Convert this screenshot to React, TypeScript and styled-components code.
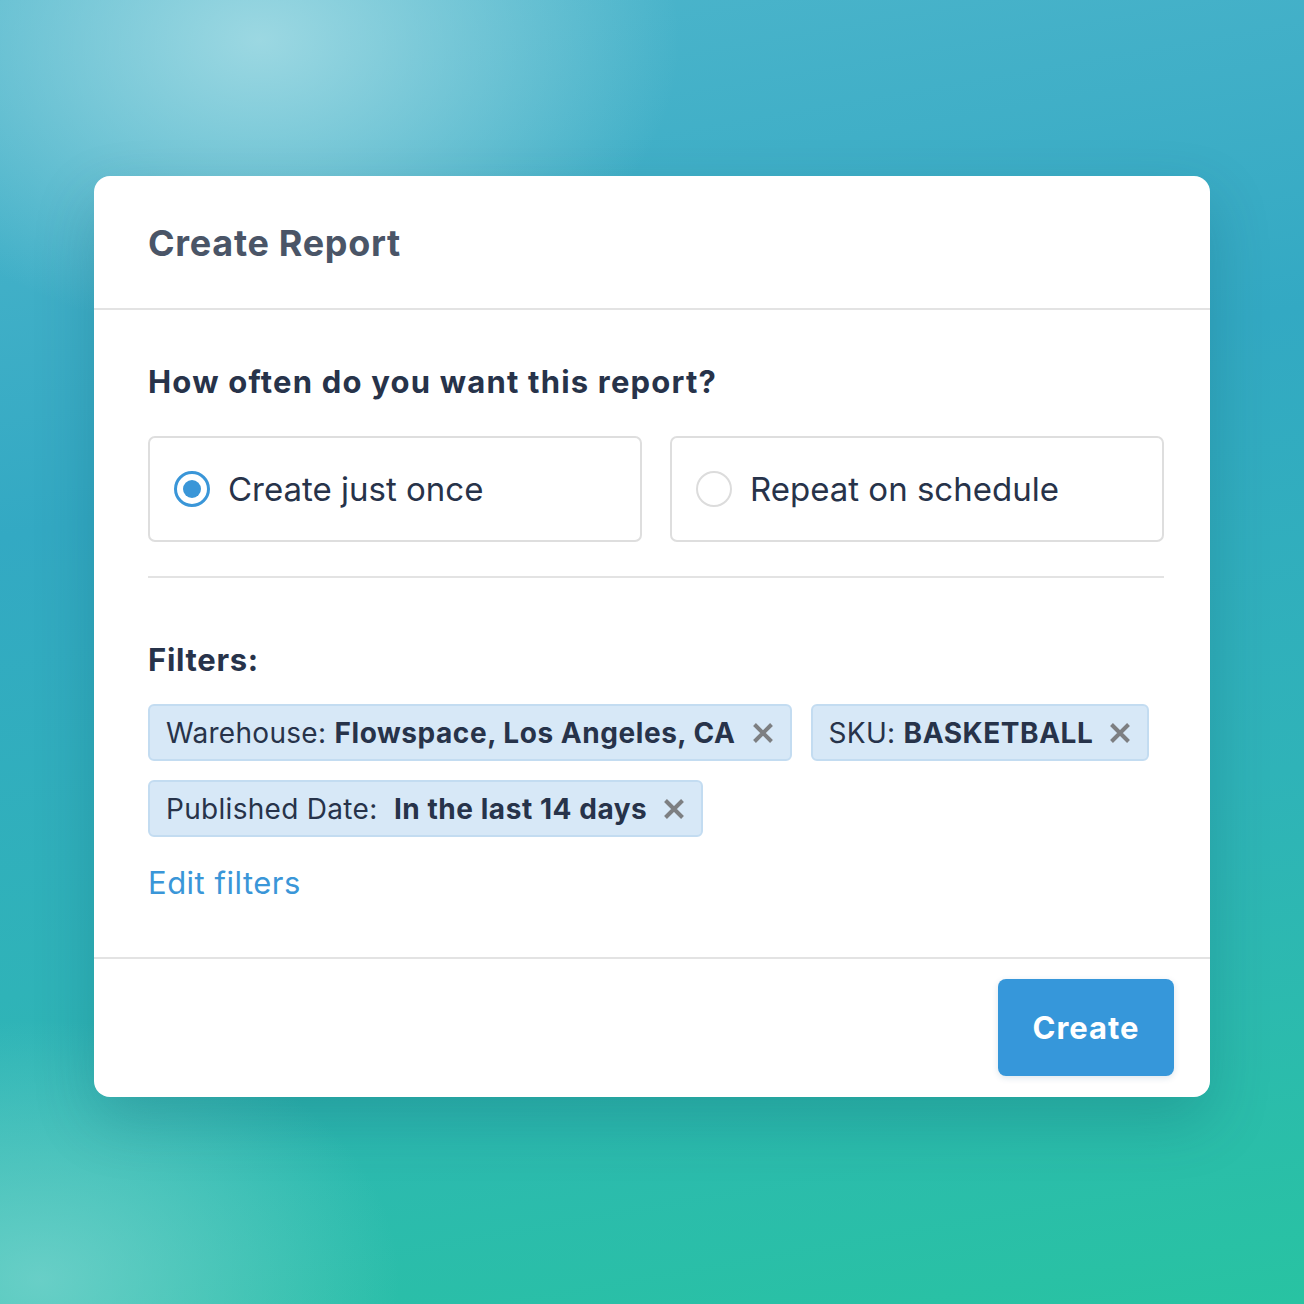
import React from "react"
import styled, { createGlobalStyle } from "styled-components"

const GlobalStyle = createGlobalStyle`
  html, body {
    margin: 0;
    padding: 0;
  }

  body {
    font-family: "Inter", "Noto Sans", sans-serif;
  }
`

const Page = styled.div`
  width: 1304px;
  height: 1304px;

  display: flex;
  justify-content: center;
  align-items: flex-start;

  padding-top: 176px;
  box-sizing: border-box;

  background:
    radial-gradient(ellipse 420px 300px at 260px 40px, rgba(170, 222, 230, 0.85), rgba(170, 222, 230, 0) 100%),
    radial-gradient(ellipse 360px 260px at 40px 1280px, rgba(130, 215, 210, 0.7), rgba(130, 215, 210, 0) 100%),
    linear-gradient(170deg, #4fb6cc 0%, #33a9c3 35%, #2fb3b8 65%, #28c3a2 100%);
`

const Card = styled.div`
  width: 1116px;

  display: flex;
  flex-direction: column;

  background: #ffffff;
  border-radius: 16px;

  box-shadow: 0 24px 60px rgba(10, 70, 90, 0.22);
`

const Header = styled.div`
  height: 132px;
  padding: 0 54px;

  display: flex;
  align-items: center;

  border-bottom: 2px solid #e3e3e3;
`

const Title = styled.h1`
  margin: 2px 0 0 0;

  font-size: 36px;
  font-weight: 700;
  color: #4a5567;
  letter-spacing: 0.7px;
`

const Body = styled.div`
  padding: 52px 46px 54px 54px;

  display: flex;
  flex-direction: column;
`

const SectionTitle = styled.h2`
  margin: 0;

  font-size: 31px;
  font-weight: 700;
  color: #27334a;
  line-height: 40px;
  letter-spacing: 1.2px;
`

const Options = styled.div`
  display: grid;
  grid-template-columns: 1fr 1fr;
  gap: 28px;

  margin-top: 34px;
  padding-bottom: 34px;

  border-bottom: 2px solid #e3e3e3;
`

const Option = styled.label`
  height: 106px;
  padding: 0 24px;
  box-sizing: border-box;

  display: flex;
  align-items: center;
  gap: 18px;

  border: 2px solid #dedede;
  border-radius: 7px;

  font-size: 33px;
  color: #27334a;

  cursor: pointer;
`

const Radio = styled.span<{ $checked?: boolean }>`
  width: 36px;
  height: 36px;
  box-sizing: border-box;
  flex-shrink: 0;

  display: flex;
  justify-content: center;
  align-items: center;

  border-radius: 50%;
  border: ${ props => props.$checked ? "3px solid #3a96d8" : "2px solid #dcdcdc" };

  &::after {
    content: "";
    display: ${ props => props.$checked ? "block" : "none" };

    width: 18px;
    height: 18px;

    border-radius: 50%;
    background: #3a96d8;
  }
`

const FiltersTitle = styled(SectionTitle)`
  margin-top: 62px;
  letter-spacing: 0.7px;
`

const Chips = styled.div`
  display: flex;
  flex-wrap: wrap;
  gap: 19px;

  margin-top: 24px;
`

const Chip = styled.div`
  height: 57px;
  padding: 0 16px 0 16px;
  box-sizing: border-box;

  display: flex;
  align-items: center;

  background: #d7e8f7;
  border: 2px solid #c3dcf1;
  border-radius: 6px;

  font-size: 28px;
  color: #27334a;
  letter-spacing: 0.3px;
  white-space: pre;
`

const ChipValue = styled.b`
  font-weight: 700;
  letter-spacing: 0.55px;
`

const Remove = styled.button`
  display: flex;
  align-items: center;
  justify-content: center;

  margin-left: 16px;
  padding: 0;

  border: none;
  background: none;

  cursor: pointer;
`

const EditLink = styled.a`
  margin-top: 26px;

  font-size: 31px;
  color: #3a96d8;
  line-height: 40px;
  letter-spacing: 0.5px;

  cursor: pointer;
`

const Footer = styled.div`
  padding: 20px 36px 21px 0;

  display: flex;
  justify-content: flex-end;

  border-top: 2px solid #e3e3e3;
`

const CreateButton = styled.button`
  width: 176px;
  height: 97px;

  border: none;
  border-radius: 8px;

  background: #3697da;
  box-shadow: 0 2px 6px rgba(20, 80, 130, 0.15);

  font-family: inherit;
  font-size: 31px;
  font-weight: 700;
  color: #ffffff;
  letter-spacing: 1px;

  cursor: pointer;
`

const Cross: React.FC = () => (
  <svg width="22" height="22" viewBox="0 0 22 22">
    <path d="M2.5 2.5 L19.5 19.5 M19.5 2.5 L2.5 19.5" stroke="#7d7f82" strokeWidth="4" strokeLinecap="butt" />
  </svg>
)

const filters = [
  { label: "Warehouse: ", value: "Flowspace, Los Angeles, CA" },
  { label: "SKU: ", value: "BASKETBALL" },
  { label: "Published Date:  ", value: "In the last 14 days" },
]

const App: React.FC = () => {

  return (
    <Page>
      <GlobalStyle />
      <Card>
        <Header>
          <Title>Create Report</Title>
        </Header>

        <Body>
          <SectionTitle>How often do you want this report?</SectionTitle>

          <Options>
            <Option>
              <Radio $checked />
              Create just once
            </Option>
            <Option>
              <Radio />
              Repeat on schedule
            </Option>
          </Options>

          <FiltersTitle>Filters:</FiltersTitle>

          <Chips>
            {filters.map(f => (
              <Chip key={f.label}>
                {f.label}
                <ChipValue>{f.value}</ChipValue>
                <Remove><Cross /></Remove>
              </Chip>
            ))}
          </Chips>

          <EditLink>Edit filters</EditLink>
        </Body>

        <Footer>
          <CreateButton>Create</CreateButton>
        </Footer>
      </Card>
    </Page>
  )
}

export default App
